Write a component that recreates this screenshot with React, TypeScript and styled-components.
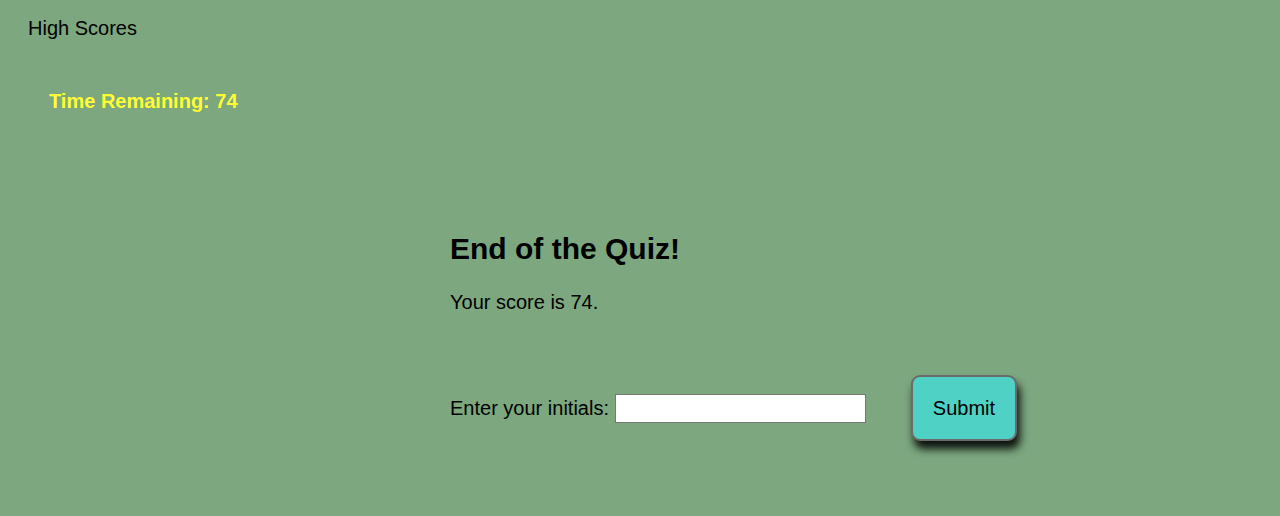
import React from "react";
import styled, { createGlobalStyle } from "styled-components";

const Global = createGlobalStyle`
  html, body { margin: 0; padding: 0; }
  body {
    background: #7ca77f;
    font-family: "Liberation Sans", Arial, sans-serif;
    color: #000;
  }
`;

const Page = styled.div`
  width: 1280px;
  height: 516px;
  display: flex;
  flex-direction: column;
`;

const Header = styled.header`
  padding: 16px 28px 0;
  font-size: 20px;
  line-height: 24px;
`;

const Timer = styled.div`
  margin-top: 49px;
  padding-left: 49px;
  font-size: 20px;
  font-weight: bold;
  color: #ffff33;
  line-height: 24px;
`;

const Main = styled.main`
  margin-top: 119px;
  padding-left: 450px;
  display: flex;
  flex-direction: column;
`;

const Title = styled.h1`
  margin: 0;
  font-size: 30px;
  line-height: 34px;
  font-weight: bold;
`;

const Score = styled.p`
  margin: 24px 0 0;
  font-size: 20px;
  line-height: 24px;
`;

const Form = styled.form`
  margin-top: 61px;
  display: flex;
  align-items: center;
`;

const Label = styled.label`
  font-size: 20px;
  line-height: 24px;
  margin-right: 6px;
`;

const Input = styled.input`
  width: 251px;
  height: 29px;
  box-sizing: border-box;
  border: 1px solid #767676;
  background: #fff;
  padding: 0 4px;
  margin: 0;
  font-size: 16px;
`;

const Button = styled.button`
  margin-left: 45px;
  width: 106px;
  height: 66px;
  box-sizing: border-box;
  background: #4fd1c5;
  border: 2px solid #6b6b6b;
  border-radius: 9px;
  font-family: "Liberation Sans", Arial, sans-serif;
  font-size: 20px;
  color: #000;
  box-shadow: 3px 8px 8px rgba(0, 0, 0, 0.9);
  cursor: pointer;
`;

export default function App() {
  return (
    <>
      <Global />
      <Page>
        <Header>High Scores</Header>
        <Timer>Time Remaining: 74</Timer>
        <Main>
          <Title>End of the Quiz!</Title>
          <Score>Your score is 74.</Score>
          <Form onSubmit={(e) => e.preventDefault()}>
            <Label htmlFor="initials">Enter your initials:</Label>
            <Input id="initials" type="text" />
            <Button type="submit">Submit</Button>
          </Form>
        </Main>
      </Page>
    </>
  );
}
